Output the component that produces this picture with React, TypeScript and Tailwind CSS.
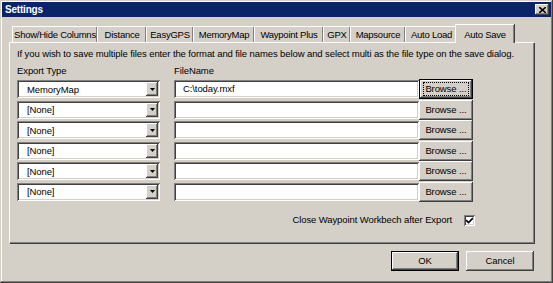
const raised =
  "shadow-[inset_-1px_-1px_#404040,inset_1px_1px_#ffffff,inset_-2px_-2px_#808080,inset_2px_2px_#d4d0c8]";
const sunken =
  "shadow-[inset_1px_1px_#808080,inset_-1px_-1px_#ffffff,inset_2px_2px_#404040,inset_-2px_-2px_#d4d0c8]";

const tabs = [
  { label: "Show/Hide Columns", w: "w-[85px]" },
  { label: "Distance", w: "w-[49px]" },
  { label: "EasyGPS", w: "w-[47px]" },
  { label: "MemoryMap", w: "w-[61px]" },
  { label: "Waypoint Plus", w: "w-[69px]" },
  { label: "GPX", w: "w-[27px]" },
  { label: "Mapsource", w: "w-[55px]" },
  { label: "Auto Load", w: "w-[52px]" },
];

const rows = [
  { type: "MemoryMap", file: "C:\\today.mxf" },
  { type: "[None]", file: "" },
  { type: "[None]", file: "" },
  { type: "[None]", file: "" },
  { type: "[None]", file: "" },
  { type: "[None]", file: "" },
];

function Combo({ value }: { value: string }) {
  return (
    <div className={`flex items-center w-[143px] h-[18px] bg-white ${sunken} p-[2px]`}>
      <span className="flex-1 pl-[8px] leading-none">{value}</span>
      <div className={`flex items-center justify-center w-[12px] h-[14px] bg-[#d4d0c8] ${raised}`}>
        <svg width="5" height="3" viewBox="0 0 5 3">
          <path d="M0 0h5L2.5 3z" fill="#000" />
        </svg>
      </div>
    </div>
  );
}

function Browse({ focused }: { focused?: boolean }) {
  return (
    <div
      className={`flex items-center justify-center w-[54px] h-[20px] bg-[#d4d0c8] ${
        focused ? "border border-black" : ""
      } ${raised}`}
    >
      <span className={focused ? "border border-dotted border-black px-[1px] leading-[12px]" : ""}>
        Browse ...
      </span>
    </div>
  );
}

export default function App() {
  return (
    <div
      className="w-[553px] h-[283px] bg-[#d4d0c8] flex flex-col pt-[2px] px-[2px] text-[9.5px] tracking-[-0.1px] text-black shadow-[inset_-1px_-1px_#404040,inset_1px_1px_#d4d0c8,inset_-2px_-2px_#808080,inset_2px_2px_#ffffff]"
      style={{ fontFamily: '"Liberation Sans", Arial, sans-serif' }}
    >
      {/* Title bar */}
      <div className="flex items-center h-[15px] bg-[#0a246a] pl-[3px] pr-[2px]">
        <span className="flex-1 text-white font-bold text-[10px] tracking-[-0.2px]">Settings</span>
        <div className={`flex items-center justify-center w-[14px] h-[11px] bg-[#d4d0c8] ${raised}`}>
          <svg width="7" height="6" viewBox="0 0 7 6">
            <path d="M0 0L7 6M7 0L0 6" stroke="#000" strokeWidth="1.6" />
          </svg>
        </div>
      </div>

      <div className="flex flex-col pl-[7px] pr-[17px] mt-[6px]">
        {/* Tabs */}
        <div className="flex items-end h-[19px] pl-[3px] tracking-[-0.25px]">
          {tabs.map((t) => (
            <div
              key={t.label}
              className={`${t.w} h-[16px] flex items-center justify-center pt-px whitespace-nowrap border-t border-l border-white shadow-[inset_-1px_0_#808080,1px_0_#404040]`}
            >
              {t.label}
            </div>
          ))}
          <div className="relative z-10 w-[59px] h-[19px] -ml-[2px] -mb-px bg-[#d4d0c8] flex items-start justify-center pt-[3px] border-t border-l border-white shadow-[inset_-1px_0_#808080,1px_0_#404040]">
            Auto Save
          </div>
        </div>

        {/* Panel */}
        <div className="flex flex-col h-[201px] border-t border-l border-white shadow-[inset_-1px_-1px_#808080,1px_1px_#404040] pl-[7px] pt-[5px]">
          <div className="leading-[12px] whitespace-nowrap">
            If you wish to save multiple files enter the format and file names below and select multi as the file type on the save dialog.
          </div>
          <div className="flex mt-[5px] leading-[12px]">
            <span className="w-[157px]">Export Type</span>
            <span>FileName</span>
          </div>
          <div className="flex flex-col mt-[2px]">
            {rows.map((r, i) => (
              <div key={i} className="flex items-center h-[20.5px]">
                <Combo value={r.type} />
                <div className={`ml-[14px] w-[245px] h-[18px] bg-white ${sunken} flex items-center pl-[9px]`}>
                  {r.file}
                </div>
                <Browse focused={i === 0} />
              </div>
            ))}
          </div>
          <div className="flex items-center justify-end pr-[59px] mt-[11px]">
            <span>Close Waypoint Workbech after Export</span>
            <div className={`ml-[12px] w-[11px] h-[11px] bg-white ${sunken} flex items-center justify-center`}>
              <svg width="7" height="7" viewBox="0 0 7 7">
                <path d="M0 3L2.5 5.5L7 1" stroke="#000" strokeWidth="1.6" fill="none" />
              </svg>
            </div>
          </div>
        </div>

        {/* Buttons */}
        <div className="flex justify-end gap-[7px] mt-[8px]">
          <div className={`w-[68px] h-[20px] flex items-center justify-center border border-black bg-[#d4d0c8] ${raised}`}>
            OK
          </div>
          <div className={`w-[68px] h-[20px] flex items-center justify-center bg-[#d4d0c8] ${raised}`}>
            Cancel
          </div>
        </div>
      </div>
    </div>
  );
}
